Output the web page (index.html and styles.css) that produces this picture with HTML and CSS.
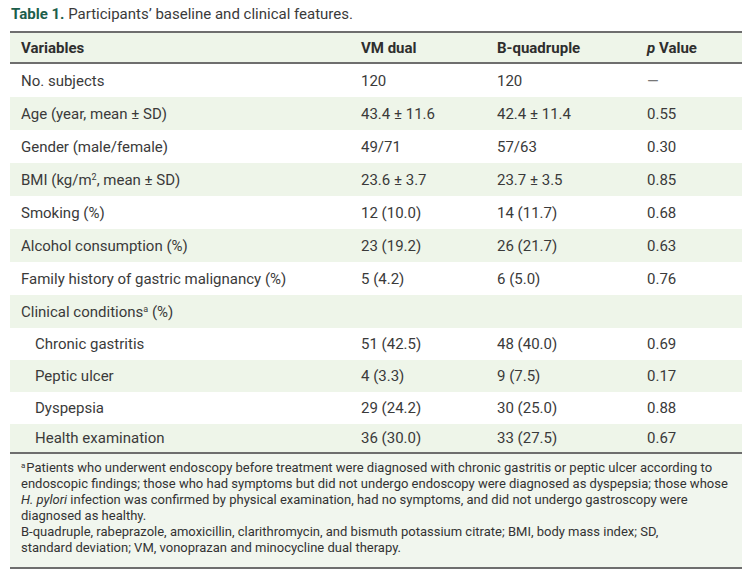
FILE: index.html
```html
<!DOCTYPE html>
<html>
<head>
<meta charset="utf-8">
<link rel="stylesheet" href="styles.css">
</head>
<body>
<div class="wrap">
  <div class="caption"><span class="label">Table 1.</span> Participants’ baseline and clinical features.</div>
  <table class="data">
    <colgroup>
      <col class="c1"><col class="c2"><col class="c3"><col class="c4">
    </colgroup>
    <thead>
      <tr><th>Variables</th><th>VM dual</th><th>B-quadruple</th><th><i>p</i> Value</th></tr>
    </thead>
    <tbody>
      <tr><td>No. subjects</td><td>120</td><td>120</td><td class="dash">—</td></tr>
      <tr class="alt"><td>Age (year, mean ± SD)</td><td>43.4 ± 11.6</td><td>42.4 ± 11.4</td><td>0.55</td></tr>
      <tr><td>Gender (male/female)</td><td>49/71</td><td>57/63</td><td>0.30</td></tr>
      <tr class="alt"><td>BMI (kg/m<sup>2</sup>, mean ± SD)</td><td>23.6 ± 3.7</td><td>23.7 ± 3.5</td><td>0.85</td></tr>
      <tr><td>Smoking (%)</td><td>12 (10.0)</td><td>14 (11.7)</td><td>0.68</td></tr>
      <tr class="alt"><td>Alcohol consumption (%)</td><td>23 (19.2)</td><td>26 (21.7)</td><td>0.63</td></tr>
      <tr><td>Family history of gastric malignancy (%)</td><td>5 (4.2)</td><td>6 (5.0)</td><td>0.76</td></tr>
      <tr class="alt"><td>Clinical conditions<sup>a</sup> (%)</td><td></td><td></td><td></td></tr>
      <tr class="sub"><td class="ind">Chronic gastritis</td><td>51 (42.5)</td><td>48 (40.0)</td><td>0.69</td></tr>
      <tr class="alt sub"><td class="ind">Peptic ulcer</td><td>4 (3.3)</td><td>9 (7.5)</td><td>0.17</td></tr>
      <tr class="sub"><td class="ind">Dyspepsia</td><td>29 (24.2)</td><td>30 (25.0)</td><td>0.88</td></tr>
      <tr class="alt last"><td class="ind">Health examination</td><td>36 (30.0)</td><td>33 (27.5)</td><td>0.67</td></tr>
    </tbody>
  </table>
  <div class="notes">
    <p><sup>a</sup>Patients who underwent endoscopy before treatment were diagnosed with chronic gastritis or peptic ulcer according to endoscopic findings; those who had symptoms but did not undergo endoscopy were diagnosed as dyspepsia; those whose <i>H. pylori</i> infection was confirmed by physical examination, had no symptoms, and did not undergo gastroscopy were diagnosed as healthy.</p>
    <p>B-quadruple, rabeprazole, amoxicillin, clarithromycin, and bismuth potassium citrate; BMI, body mass index; SD, standard&nbsp;deviation; VM, vonoprazan and minocycline dual therapy.</p>
  </div>
</div>
</body>
</html>
```

FILE: styles.css
```css
html, body {
  margin: 0;
  padding: 0;
  background: #ffffff;
}
body {
  font-family: Roboto, "Liberation Sans", sans-serif;
  color: #333333;
}
.wrap {
  width: 732px;
  margin-left: 10px;
}
.caption {
  font-size: 15px;
  line-height: 18px;
  padding-top: 5px;
  padding-left: 1px;
  height: 31px;
  box-sizing: border-box;
  color: #3a3a3a;
}
.caption .label {
  font-weight: bold;
  color: #1c5e4b;
}
.data {
  width: 732px;
  border-collapse: collapse;
  font-size: 15px;
  border-top: 2px solid #6e6e6e;
}
.c1 { width: 340px; }
.c2 { width: 136px; }
.c3 { width: 150px; }
.c4 { width: 106px; }
.data th {
  text-align: left;
  font-weight: bold;
  background: #eef5e9;
  height: 29px;
  padding: 0 0 0 11px;
  border-bottom: 2px solid #6e6e6e;
  color: #2e2e2e;
}
.data td {
  height: 33px;
  padding: 0 0 0 11px;
  color: #3a3a3a;
}
.data tr.sub td {
  height: 32px;
}
.data tr.alt td {
  background: #eef5e9;
}
.data tr.last td {
  height: 28px;
}
.data td.ind {
  padding-left: 25px;
}
.data td.dash {
  color: #777;
}
sup {
  font-size: 9px;
  line-height: 0;
  vertical-align: 5px;
}
.notes {
  background: #f1f6ee;
  border-top: 2px solid #6e6e6e;
  border-bottom: 2px solid #6e6e6e;
  padding: 6px 11px 11px 11px;
  font-size: 13px;
  line-height: 16px;
  color: #333;
}
.notes p {
  margin: 0;
}
.notes sup {
  font-size: 8px;
  vertical-align: 4px;
  margin-right: 1px;
}
```
